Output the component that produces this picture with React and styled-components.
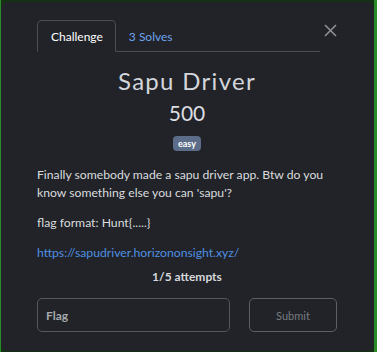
import React from "react";
import styled, { createGlobalStyle } from "styled-components";

const Global = createGlobalStyle`
  html, body { margin: 0; padding: 0; }
  body { background: #0f1f10; font-family: Lato, "Noto Sans", sans-serif; }
`;

const Backdrop = styled.div`
  width: 377px;
  height: 352px;
  box-sizing: border-box;
  padding: 2px 3px 1px 1px;
  background: linear-gradient(to right, #2a8a2a 0 1px, #163016 1px calc(100% - 3px), #2a8a2a calc(100% - 3px));
`;

const Modal = styled.div`
  height: 100%;
  box-sizing: border-box;
  background: #212328;
  border-radius: 7px;
  padding: 18px 37px 0 36px;
  display: flex;
  flex-direction: column;
  color: #d8dadd;
`;

const Header = styled.div`
  display: flex;
  align-items: flex-start;
`;

const TabList = styled.div`
  flex: 1;
  display: flex;
  border-bottom: 1px solid #4a4e55;
  height: 31px;
`;

const Tab = styled.div`
  box-sizing: border-box;
  height: 32px;
  padding: 0 12px 0 ${(p) => (p.$active ? "13px" : "12px")};
  display: flex;
  align-items: center;
  font-size: 12px;
  color: ${(p) => (p.$active ? "#ffffff" : "#6fa3ee")};
  border: 1px solid ${(p) => (p.$active ? "#4a4e55" : "transparent")};
  border-bottom-color: ${(p) => (p.$active ? "#212328" : "transparent")};
  border-radius: 5px 5px 0 0;
`;

const Close = styled.button`
  width: 17px;
  height: 20px;
  margin-top: 0;
  padding: 0;
  border: 0;
  background: none;
  display: flex;
  align-items: center;
  justify-content: flex-end;
`;

const Title = styled.h1`
  margin: 14px 0 0;
  text-align: center;
  font-size: 24px;
  font-weight: 400;
  letter-spacing: 1.3px;
  color: #d3d6db;
  line-height: 30px;
`;

const Points = styled.div`
  text-align: center;
  font-size: 21px;
  line-height: 26px;
  margin-top: 4px;
  color: #dcdee2;
`;

const BadgeRow = styled.div`
  display: flex;
  justify-content: center;
  margin-top: 10px;
`;

const Badge = styled.span`
  background: #5b6d89;
  color: #fff;
  font-size: 9px;
  font-weight: 700;
  border-radius: 4px;
  padding: 0 5px;
  height: 15px;
  line-height: 15px;
`;

const Desc = styled.div`
  margin-top: 15px;
  font-size: 12.2px;
  line-height: 18px;
  color: #dadcdf;
  p { margin: 0 0 12px; }
  p:last-child { margin-bottom: 0; }
`;

const Link = styled.a`
  color: #4f8fe2;
  text-decoration: none;
`;

const Attempts = styled.div`
  text-align: center;
  font-size: 12px;
  font-weight: 700;
  color: #d6d8dc;
  margin-top: 6px;
  line-height: 18px;
`;

const Form = styled.div`
  display: flex;
  gap: 19px;
  margin-top: 12px;
`;

const Input = styled.div`
  width: 193px;
  height: 34px;
  box-sizing: border-box;
  border: 1px solid #54585e;
  border-radius: 5px;
  padding: 0 8px;
  display: flex;
  align-items: center;
  font-size: 12px;
  font-weight: 700;
  color: #a6a9ad;
`;

const Submit = styled.div`
  width: 88px;
  height: 34px;
  box-sizing: border-box;
  border: 1px solid #5c6066;
  border-radius: 5px;
  display: flex;
  align-items: center;
  justify-content: center;
  font-size: 11px;
  color: #787c82;
`;

export default function App() {
  return (
    <>
      <Global />
      <Backdrop>
        <Modal>
          <Header>
            <TabList>
              <Tab $active>Challenge</Tab>
              <Tab>3 Solves</Tab>
            </TabList>
            <Close aria-label="close">
              <svg width="13" height="13" viewBox="0 0 13 13">
                <path d="M1 1L12 12M12 1L1 12" stroke="#8d9095" strokeWidth="1.6" />
              </svg>
            </Close>
          </Header>
          <Title>Sapu Driver</Title>
          <Points>500</Points>
          <BadgeRow>
            <Badge>easy</Badge>
          </BadgeRow>
          <Desc>
            <p>Finally somebody made a sapu driver app. Btw do you know something else you can 'sapu'?</p>
            <p>flag format: Hunt{"{.....}"}</p>
            <p>
              <Link href="#">https://sapudriver.horizononsight.xyz/</Link>
            </p>
          </Desc>
          <Attempts>1/5 attempts</Attempts>
          <Form>
            <Input>Flag</Input>
            <Submit>Submit</Submit>
          </Form>
        </Modal>
      </Backdrop>
    </>
  );
}
